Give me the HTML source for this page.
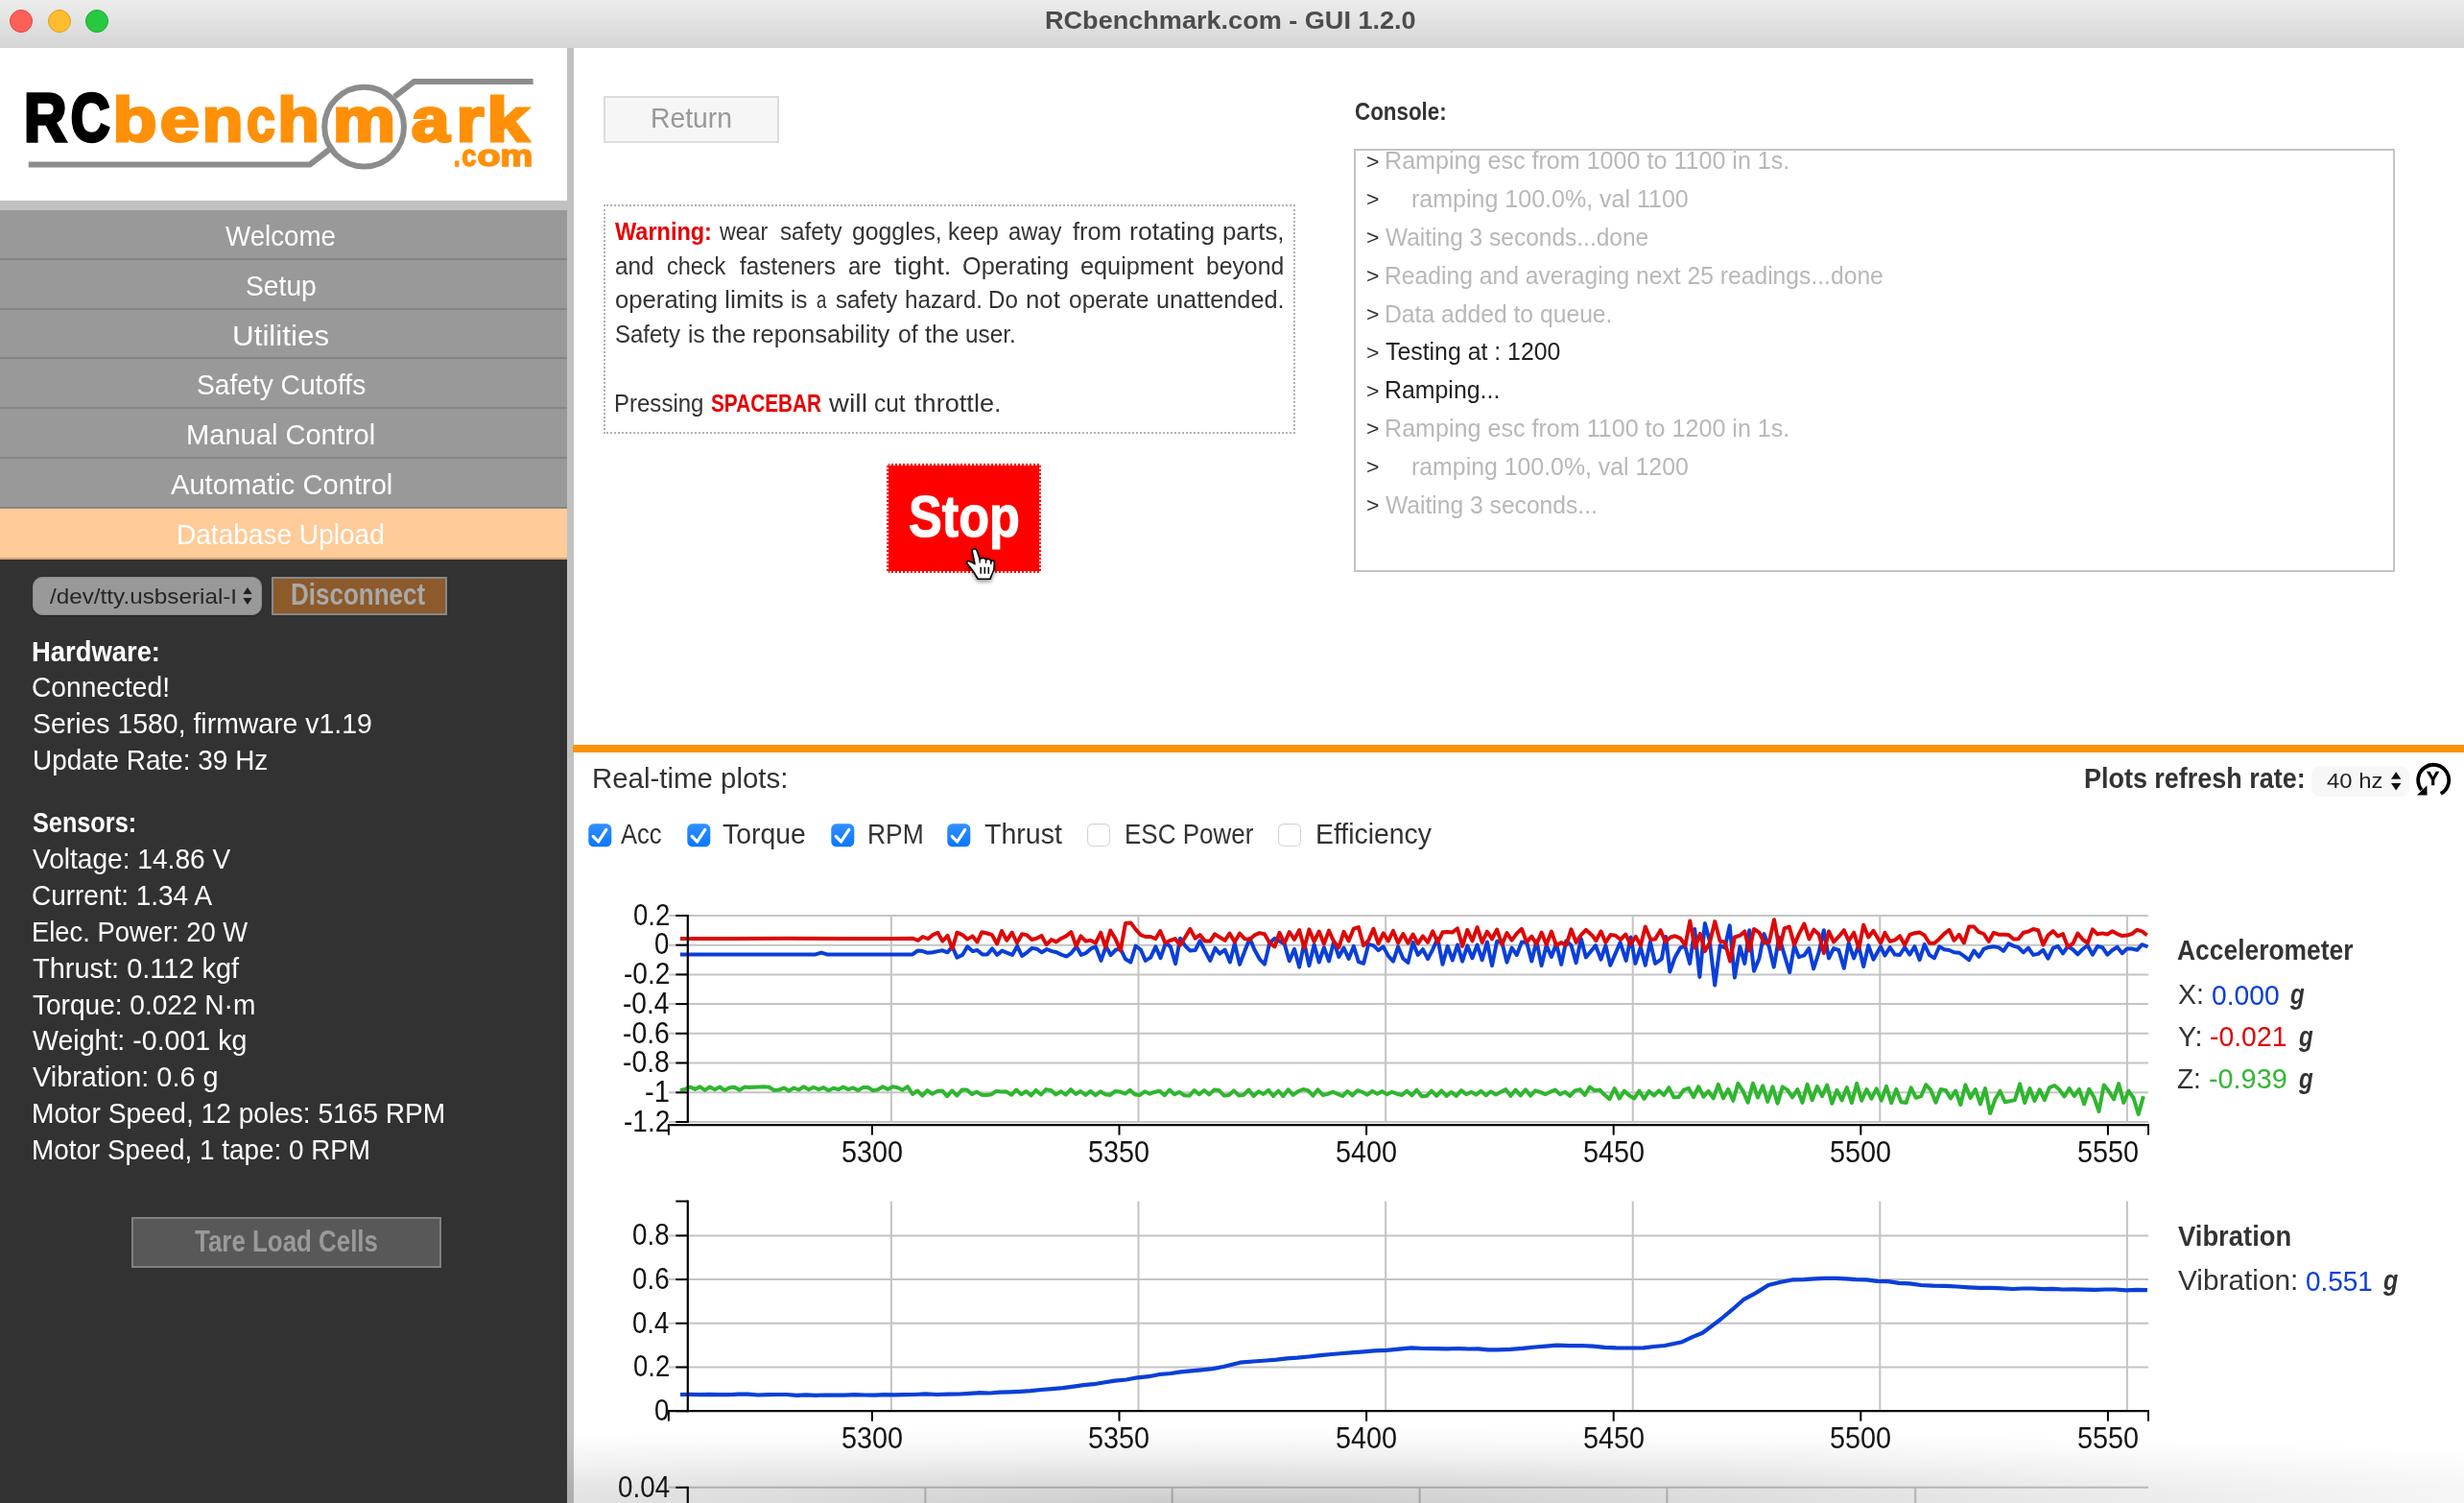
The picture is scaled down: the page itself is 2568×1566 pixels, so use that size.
<!DOCTYPE html><html><head><meta charset="utf-8"><title>RCbenchmark.com - GUI 1.2.0</title><style>
*{box-sizing:border-box;margin:0;padding:0}
html,body{width:2568px;height:1566px;overflow:hidden;background:#fff}
body{position:relative;font-family:"Liberation Sans",sans-serif;color:#333}
.abs{position:absolute}
.t{position:absolute;white-space:pre;line-height:1;transform-origin:0 0;display:block}
#titlebar{left:0;top:0;width:2568px;height:49.6px;background:linear-gradient(#ececec,#e4e4e4 40%,#d5d5d5);z-index:5}
.tl{position:absolute;top:9.8px;width:24px;height:24px;border-radius:50%}
#sidebar{left:0;top:49px;width:591px;height:1517px;background:#323232}
#sideborder{left:591px;top:49px;width:6.6px;height:1517px;background:#c1c1c1}
#logo{left:0;top:49px;width:591px;height:160px;background:#fff}
#logobar{left:0;top:209px;width:591px;height:10px;background:#c1c1c1}
.mi{position:absolute;left:0;width:591px;height:52px;background:#999;border-bottom:2px solid #858585}
.mi.sel{background:#ffcb98;border-bottom:2px solid #d0a57c}
#main{left:597px;top:49px;width:1971px;height:1517px;background:#fff}
.btn{position:absolute}
</style></head><body><div id="titlebar" class="abs"><div class="tl" style="left:9.8px;background:#fe5f57;border:1px solid #e2463f"></div><div class="tl" style="left:49.5px;background:#febc2e;border:1px solid #dfa023"></div><div class="tl" style="left:89.3px;background:#28c840;border:1px solid #1dad2b"></div><span class="t" style="left:1088.61px;top:7.99px;font-size:26px;color:#4c4c4c;transform:scaleX(1.0413);font-weight:bold;">RCbenchmark.com - GUI 1.2.0</span></div><div id="sidebar" class="abs"></div><div id="sideborder" class="abs"></div><div id="logo" class="abs"><svg width="591" height="160" viewBox="0 49 591 160" style="position:absolute;left:0;top:0"><g font-family="Liberation Sans, sans-serif" font-weight="bold"><text><tspan x="25.0" y="147.0" font-size="70" fill="#000" stroke="#000" stroke-width="3.5" textLength="44.49" lengthAdjust="spacingAndGlyphs">R</tspan><tspan x="73.75" y="147.0" font-size="70" fill="#000" stroke="#000" stroke-width="3.5" textLength="40.77" lengthAdjust="spacingAndGlyphs">C</tspan><tspan x="117.41" y="146.9" font-size="65.5" fill="#ff9008" stroke="#ff9008" stroke-width="3" textLength="45.99" lengthAdjust="spacingAndGlyphs">b</tspan><tspan x="166.76" y="146.9" font-size="65.5" fill="#ff9008" stroke="#ff9008" stroke-width="3" textLength="41.07" lengthAdjust="spacingAndGlyphs">e</tspan><tspan x="210.75" y="146.9" font-size="65.5" fill="#ff9008" stroke="#ff9008" stroke-width="3" textLength="42.62" lengthAdjust="spacingAndGlyphs">n</tspan><tspan x="257.0" y="146.9" font-size="65.5" fill="#ff9008" stroke="#ff9008" stroke-width="3" textLength="29.74" lengthAdjust="spacingAndGlyphs">c</tspan><tspan x="289.39" y="146.9" font-size="65.5" fill="#ff9008" stroke="#ff9008" stroke-width="3" textLength="43.48" lengthAdjust="spacingAndGlyphs">h</tspan><tspan x="346.86" y="146.9" font-size="65.5" fill="#ff9008" stroke="#ff9008" stroke-width="3" textLength="65.44" lengthAdjust="spacingAndGlyphs">m</tspan><tspan x="428.75" y="146.9" font-size="65.5" fill="#ff9008" stroke="#ff9008" stroke-width="3" textLength="39.78" lengthAdjust="spacingAndGlyphs">a</tspan><tspan x="475.59" y="146.9" font-size="65.5" fill="#ff9008" stroke="#ff9008" stroke-width="3" textLength="28.82" lengthAdjust="spacingAndGlyphs">r</tspan><tspan x="507.25" y="146.9" font-size="65.5" fill="#ff9008" stroke="#ff9008" stroke-width="3" textLength="43.96" lengthAdjust="spacingAndGlyphs">k</tspan></text><text><tspan x="473.3" y="173.3" font-size="32" fill="#ff9008" stroke="#ff9008" stroke-width="1.5" textLength="6.28" lengthAdjust="spacingAndGlyphs">.</tspan><tspan x="481.45" y="173.3" font-size="32" fill="#ff9008" stroke="#ff9008" stroke-width="1.5" textLength="14.97" lengthAdjust="spacingAndGlyphs">c</tspan><tspan x="497.48" y="173.3" font-size="32" fill="#ff9008" stroke="#ff9008" stroke-width="1.5" textLength="24.15" lengthAdjust="spacingAndGlyphs">o</tspan><tspan x="521.48" y="173.3" font-size="32" fill="#ff9008" stroke="#ff9008" stroke-width="1.5" textLength="33.94" lengthAdjust="spacingAndGlyphs">m</tspan></text></g><g fill="none" stroke="#8c8c8c" stroke-width="6"><circle cx="379.6" cy="132.1" r="41.4"/><path d="M29.75 171.4 H323 L347.5 152.5"/><path d="M555.6 85 H431.5 L411 100.8"/></g></svg></div><div id="logobar" class="abs"></div><nav id="menu"><div class="mi" style="top:219.00px;height:51.75px"></div><span class="t" style="left:235.20px;top:231.16px;font-size:30px;color:#fff;transform:scaleX(0.9240);">Welcome</span><div class="mi" style="top:270.75px;height:51.75px"></div><span class="t" style="left:255.92px;top:282.91px;font-size:30px;color:#fff;transform:scaleX(0.9417);">Setup</span><div class="mi" style="top:322.50px;height:51.75px"></div><span class="t" style="left:241.74px;top:334.66px;font-size:30px;color:#fff;transform:scaleX(1.0462);">Utilities</span><div class="mi" style="top:374.25px;height:51.75px"></div><span class="t" style="left:204.62px;top:386.41px;font-size:30px;color:#fff;transform:scaleX(0.9381);">Safety Cutoffs</span><div class="mi" style="top:426.00px;height:51.75px"></div><span class="t" style="left:194.13px;top:438.16px;font-size:30px;color:#fff;transform:scaleX(0.9693);">Manual Control</span><div class="mi" style="top:477.75px;height:51.75px"></div><span class="t" style="left:177.70px;top:489.90px;font-size:30px;color:#fff;transform:scaleX(0.9702);">Automatic Control</span><div class="mi sel" style="top:529.50px;height:53.50px"></div><span class="t" style="left:183.71px;top:541.65px;font-size:30px;color:#fff;transform:scaleX(0.9350);">Database Upload</span></nav><div id="status"><div class="abs" style="left:34px;top:601px;width:239px;height:40px;border-radius:10px;background:#999;border:1px solid #8c8c8c;box-shadow:0 1px 1px rgba(0,0,0,.3)"></div><span class="t" style="left:51.90px;top:611.28px;font-size:22px;color:#262626;transform:scaleX(1.1030);">/dev/tty.usbserial-I</span><svg class="abs" style="left:250px;top:608px" width="16" height="26" viewBox="0 0 16 26"><path d="M8 4 L12.6 11 H3.4 Z M8 22 L12.6 15 H3.4 Z" fill="#1e1e1e"/></svg><div class="abs" style="left:282.5px;top:601px;width:183.5px;height:40px;background:#8c5a2b;border:2px solid #888"></div><span class="t" style="left:303.08px;top:603.68px;font-size:30.5px;color:#a9a9a9;transform:scaleX(0.8519);font-weight:bold;">Disconnect</span><span class="t" style="left:33.09px;top:663.53px;font-size:29.5px;color:#fff;transform:scaleX(0.9287);font-weight:bold;">Hardware:</span><span class="t" style="left:33.48px;top:701.33px;font-size:29.5px;color:#fff;transform:scaleX(0.9541);">Connected!</span><span class="t" style="left:33.71px;top:739.33px;font-size:29.5px;color:#fff;transform:scaleX(0.9634);">Series 1580, firmware v1.19</span><span class="t" style="left:33.65px;top:777.13px;font-size:29.5px;color:#fff;transform:scaleX(0.9466);">Update Rate: 39 Hz</span><span class="t" style="left:34.41px;top:842.33px;font-size:29.5px;color:#fff;transform:scaleX(0.8562);font-weight:bold;">Sensors:</span><span class="t" style="left:34.20px;top:880.33px;font-size:29.5px;color:#fff;transform:scaleX(0.9522);">Voltage: 14.86 V</span><span class="t" style="left:33.29px;top:918.13px;font-size:29.5px;color:#fff;transform:scaleX(0.9476);">Current: 1.34 A</span><span class="t" style="left:33.36px;top:956.23px;font-size:29.5px;color:#fff;transform:scaleX(0.9276);">Elec. Power: 20 W</span><span class="t" style="left:33.95px;top:994.33px;font-size:29.5px;color:#fff;transform:scaleX(0.9816);">Thrust: 0.112 kgf</span><span class="t" style="left:33.96px;top:1032.03px;font-size:29.5px;color:#fff;transform:scaleX(0.9508);">Torque: 0.022 N·m</span><span class="t" style="left:34.40px;top:1069.33px;font-size:29.5px;color:#fff;transform:scaleX(0.9681);">Weight: -0.001 kg</span><span class="t" style="left:34.40px;top:1107.13px;font-size:29.5px;color:#fff;transform:scaleX(0.9779);">Vibration: 0.6 g</span><span class="t" style="left:33.30px;top:1145.13px;font-size:29.5px;color:#fff;transform:scaleX(0.9529);">Motor Speed, 12 poles: 5165 RPM</span><span class="t" style="left:33.32px;top:1183.23px;font-size:29.5px;color:#fff;transform:scaleX(0.9443);">Motor Speed, 1 tape: 0 RPM</span><div class="abs" style="left:137.2px;top:1267.9px;width:322.5px;height:53.1px;background:#585858;border:2px solid #808080"></div><span class="t" style="left:203.30px;top:1277.68px;font-size:30.5px;color:#9a9a9a;transform:scaleX(0.8492);font-weight:bold;">Tare Load Cells</span></div><div id="content"><div class="abs" style="left:629px;top:99.5px;width:183px;height:49.5px;background:#f6f6f6;border:2px solid #dcdcdc"></div><span class="t" style="left:677.99px;top:107.70px;font-size:30px;color:#999;transform:scaleX(0.9440);">Return</span><div class="abs" style="left:629px;top:213.5px;width:1721px;height:0"></div><div class="abs" style="left:628.9px;top:213.2px;width:720.9px;height:238.5px;border:2px dotted #b2b2b2"></div><div id="warning"><span class="t" style="left:641.30px;top:228.86px;font-size:25.5px;color:#e60000;transform:scaleX(0.9216);font-weight:bold;">Warning: </span><span class="t" style="left:750.46px;top:228.86px;font-size:25.5px;color:#333;transform:scaleX(0.9074);">wear </span><span class="t" style="left:812.82px;top:228.86px;font-size:25.5px;color:#333;transform:scaleX(0.9477);">safety </span><span class="t" style="left:887.53px;top:228.86px;font-size:25.5px;color:#333;transform:scaleX(0.9722);">goggles, </span><span class="t" style="left:988.28px;top:228.86px;font-size:25.5px;color:#333;transform:scaleX(0.9531);">keep </span><span class="t" style="left:1050.56px;top:228.86px;font-size:25.5px;color:#333;transform:scaleX(0.9313);">away </span><span class="t" style="left:1117.50px;top:228.86px;font-size:25.5px;color:#333;transform:scaleX(0.9964);">from </span><span class="t" style="left:1176.83px;top:228.86px;font-size:25.5px;color:#333;transform:scaleX(1.0460);">rotating </span><span class="t" style="left:1274.19px;top:228.86px;font-size:25.5px;color:#333;transform:scaleX(1.0120);">parts, </span><span class="t" style="left:640.94px;top:264.61px;font-size:25.5px;color:#333;transform:scaleX(0.9549);">and </span><span class="t" style="left:694.77px;top:264.61px;font-size:25.5px;color:#333;transform:scaleX(0.9212);">check </span><span class="t" style="left:771.00px;top:264.61px;font-size:25.5px;color:#333;transform:scaleX(0.9530);">fasteners </span><span class="t" style="left:883.75px;top:264.61px;font-size:25.5px;color:#333;transform:scaleX(0.9422);">are </span><span class="t" style="left:932.00px;top:264.61px;font-size:25.5px;color:#333;transform:scaleX(1.0759);">tight. </span><span class="t" style="left:1002.61px;top:264.61px;font-size:25.5px;color:#333;transform:scaleX(0.9921);">Operating </span><span class="t" style="left:1126.21px;top:264.61px;font-size:25.5px;color:#333;transform:scaleX(0.9909);">equipment </span><span class="t" style="left:1257.05px;top:264.61px;font-size:25.5px;color:#333;transform:scaleX(0.9698);">beyond </span><span class="t" style="left:640.90px;top:300.36px;font-size:25.5px;color:#333;transform:scaleX(1.0076);">operating </span><span class="t" style="left:754.81px;top:300.36px;font-size:25.5px;color:#333;transform:scaleX(1.0632);">limits </span><span class="t" style="left:824.29px;top:300.36px;font-size:25.5px;color:#333;transform:scaleX(0.9485);">is </span><span class="t" style="left:850.52px;top:300.36px;font-size:25.5px;color:#333;transform:scaleX(0.7308);">a </span><span class="t" style="left:871.12px;top:300.36px;font-size:25.5px;color:#333;transform:scaleX(0.9448);">safety </span><span class="t" style="left:943.48px;top:300.36px;font-size:25.5px;color:#333;transform:scaleX(0.9512);">hazard. </span><span class="t" style="left:1030.41px;top:300.36px;font-size:25.5px;color:#333;transform:scaleX(0.9469);">Do </span><span class="t" style="left:1069.09px;top:300.36px;font-size:25.5px;color:#333;transform:scaleX(1.0106);">not </span><span class="t" style="left:1114.23px;top:300.36px;font-size:25.5px;color:#333;transform:scaleX(0.9639);">operate </span><span class="t" style="left:1204.92px;top:300.36px;font-size:25.5px;color:#333;transform:scaleX(0.9915);">unattended. </span><span class="t" style="left:640.95px;top:336.11px;font-size:25.5px;color:#333;transform:scaleX(0.9399);">Safety </span><span class="t" style="left:716.88px;top:336.11px;font-size:25.5px;color:#333;transform:scaleX(0.9548);">is </span><span class="t" style="left:741.90px;top:336.11px;font-size:25.5px;color:#333;transform:scaleX(0.9967);">the </span><span class="t" style="left:783.50px;top:336.11px;font-size:25.5px;color:#333;transform:scaleX(1.0009);">reponsability </span><span class="t" style="left:935.62px;top:336.11px;font-size:25.5px;color:#333;transform:scaleX(0.9729);">of </span><span class="t" style="left:964.40px;top:336.11px;font-size:25.5px;color:#333;transform:scaleX(0.9967);">the </span><span class="t" style="left:1005.98px;top:336.11px;font-size:25.5px;color:#333;transform:scaleX(0.9536);">user. </span><span class="t" style="left:640.22px;top:407.61px;font-size:25.5px;color:#333;transform:scaleX(0.9417);">Pressing </span><span class="t" style="left:740.58px;top:407.61px;font-size:25.5px;color:#e60000;transform:scaleX(0.8153);font-weight:bold;">SPACEBAR </span><span class="t" style="left:863.85px;top:407.61px;font-size:25.5px;color:#333;transform:scaleX(1.1339);">will </span><span class="t" style="left:910.84px;top:407.61px;font-size:25.5px;color:#333;transform:scaleX(0.9578);">cut </span><span class="t" style="left:952.60px;top:407.61px;font-size:25.5px;color:#333;transform:scaleX(1.0648);">throttle. </span></div><div class="abs" style="left:923.5px;top:483px;width:161.5px;height:114px;background:#fe0000;border:2px dotted #fff;outline:0"></div><span class="t" style="left:946.69px;top:508.16px;font-size:61px;color:#fff;-webkit-text-stroke:1.2px #fff;transform:scaleX(0.8546);font-weight:bold;">Stop</span><svg class="abs" style="left:1003px;top:567px;filter:drop-shadow(0 2px 2px rgba(0,0,0,.45))" width="38" height="42" viewBox="-4 -4 38 42"><path d="M8.6 0.6 C6.8 0.8 6 2.4 6.4 4 L9 16.6 L3 13.6 C1.4 13.2 0.2 14.6 0.8 16 L7.5 24.3 L11.4 31 L12.3 32.3 H25.1 L25.8 29.6 C27.6 26 28.8 23.4 29 21 L29.3 14.6 C29 12.8 26.4 12.6 25.8 14.4 C25.6 11.4 22.2 10.4 20.6 12.4 C20 10.2 16.2 9.4 14.2 11.8 L11.4 3.6 C11 1.8 10 0.6 8.6 0.6 Z" fill="#fff" stroke="#000" stroke-width="1.6" stroke-linejoin="round"/><path d="M15.2 19.8 V26.7 M19.3 19.8 V26.7 M23.3 19.8 V26.7" stroke="#000" stroke-width="1.5" fill="none"/><path d="M14.1 11.8 V15.6 M20.5 12.3 V16 M25.8 14.4 V17.2" stroke="#000" stroke-width="1.3" fill="none"/></svg><span class="t" style="left:1412.00px;top:102.67px;font-size:26.5px;color:#333;transform:scaleX(0.8438);font-weight:bold;">Console:</span><div class="abs" style="left:1411.4px;top:155.3px;width:1085px;height:441px;border:2px solid #c4c4c4;background:#fff"></div><div class="line"><span class="t" style="left:1423.62px;top:158.50px;font-size:21.5px;color:#333;transform:scaleX(1.0698);">&gt; </span><span class="t" style="left:1443.34px;top:155.24px;font-size:25px;color:#b8b8b8;transform:scaleX(1.0041);">Ramping esc from 1000 to 1100 in 1s.</span></div><div class="line"><span class="t" style="left:1423.62px;top:198.35px;font-size:21.5px;color:#333;transform:scaleX(1.0698);">&gt; </span><span class="t" style="left:1471.24px;top:195.09px;font-size:25px;color:#b8b8b8;transform:scaleX(1.0006);">ramping 100.0%, val 1100</span></div><div class="line"><span class="t" style="left:1423.62px;top:238.20px;font-size:21.5px;color:#333;transform:scaleX(1.0698);">&gt; </span><span class="t" style="left:1444.10px;top:234.94px;font-size:25px;color:#b8b8b8;transform:scaleX(0.9800);">Waiting 3 seconds...done</span></div><div class="line"><span class="t" style="left:1423.62px;top:278.05px;font-size:21.5px;color:#333;transform:scaleX(1.0698);">&gt; </span><span class="t" style="left:1443.37px;top:274.79px;font-size:25px;color:#b8b8b8;transform:scaleX(0.9868);">Reading and averaging next 25 readings...done</span></div><div class="line"><span class="t" style="left:1423.62px;top:317.90px;font-size:21.5px;color:#333;transform:scaleX(1.0698);">&gt; </span><span class="t" style="left:1443.37px;top:314.64px;font-size:25px;color:#b8b8b8;transform:scaleX(0.9874);">Data added to queue.</span></div><div class="line"><span class="t" style="left:1423.62px;top:357.75px;font-size:21.5px;color:#333;transform:scaleX(1.0698);">&gt; </span><span class="t" style="left:1443.71px;top:354.49px;font-size:25px;color:#222;transform:scaleX(0.9943);">Testing at : 1200</span></div><div class="line"><span class="t" style="left:1423.62px;top:397.60px;font-size:21.5px;color:#333;transform:scaleX(1.0698);">&gt; </span><span class="t" style="left:1443.36px;top:394.34px;font-size:25px;color:#222;transform:scaleX(0.9951);">Ramping...</span></div><div class="line"><span class="t" style="left:1423.62px;top:437.45px;font-size:21.5px;color:#333;transform:scaleX(1.0698);">&gt; </span><span class="t" style="left:1443.34px;top:434.19px;font-size:25px;color:#b8b8b8;transform:scaleX(1.0041);">Ramping esc from 1100 to 1200 in 1s.</span></div><div class="line"><span class="t" style="left:1423.62px;top:477.30px;font-size:21.5px;color:#333;transform:scaleX(1.0698);">&gt; </span><span class="t" style="left:1471.25px;top:474.04px;font-size:25px;color:#b8b8b8;transform:scaleX(0.9942);">ramping 100.0%, val 1200</span></div><div class="line"><span class="t" style="left:1423.62px;top:517.15px;font-size:21.5px;color:#333;transform:scaleX(1.0698);">&gt; </span><span class="t" style="left:1444.10px;top:513.89px;font-size:25px;color:#b8b8b8;transform:scaleX(0.9850);">Waiting 3 seconds...</span></div><div class="abs" style="left:597px;top:776px;width:1971px;height:8px;background:#ff9307"></div></div><div id="plots"><span class="t" style="left:616.70px;top:796.31px;font-size:30px;color:#333;transform:scaleX(0.9806);">Real-time plots:</span><svg class="abs" style="left:613px;top:857.5px" width="25" height="25" viewBox="0 0 25 25"><defs><linearGradient id="cbg" x1="0" y1="0" x2="0" y2="1"><stop offset="0" stop-color="#3290ff"/><stop offset="1" stop-color="#0a76ff"/></linearGradient></defs><rect x="0.3" y="0.3" width="24" height="24" rx="5.5" fill="url(#cbg)"/><path d="M5.2 13.4 L10.6 19 L18.8 6.4" fill="none" stroke="#fff" stroke-width="3.2" stroke-linecap="round" stroke-linejoin="round"/></svg><span class="t" style="left:647.40px;top:853.71px;font-size:30px;color:#333;transform:scaleX(0.8518);">Acc</span><svg class="abs" style="left:716.4px;top:857.5px" width="25" height="25" viewBox="0 0 25 25"><defs><linearGradient id="cbg" x1="0" y1="0" x2="0" y2="1"><stop offset="0" stop-color="#3290ff"/><stop offset="1" stop-color="#0a76ff"/></linearGradient></defs><rect x="0.3" y="0.3" width="24" height="24" rx="5.5" fill="url(#cbg)"/><path d="M5.2 13.4 L10.6 19 L18.8 6.4" fill="none" stroke="#fff" stroke-width="3.2" stroke-linecap="round" stroke-linejoin="round"/></svg><span class="t" style="left:753.46px;top:853.71px;font-size:30px;color:#333;transform:scaleX(0.9473);">Torque</span><svg class="abs" style="left:865.8px;top:857.5px" width="25" height="25" viewBox="0 0 25 25"><defs><linearGradient id="cbg" x1="0" y1="0" x2="0" y2="1"><stop offset="0" stop-color="#3290ff"/><stop offset="1" stop-color="#0a76ff"/></linearGradient></defs><rect x="0.3" y="0.3" width="24" height="24" rx="5.5" fill="url(#cbg)"/><path d="M5.2 13.4 L10.6 19 L18.8 6.4" fill="none" stroke="#fff" stroke-width="3.2" stroke-linecap="round" stroke-linejoin="round"/></svg><span class="t" style="left:903.74px;top:853.71px;font-size:30px;color:#333;transform:scaleX(0.8796);">RPM</span><svg class="abs" style="left:986.7px;top:857.5px" width="25" height="25" viewBox="0 0 25 25"><defs><linearGradient id="cbg" x1="0" y1="0" x2="0" y2="1"><stop offset="0" stop-color="#3290ff"/><stop offset="1" stop-color="#0a76ff"/></linearGradient></defs><rect x="0.3" y="0.3" width="24" height="24" rx="5.5" fill="url(#cbg)"/><path d="M5.2 13.4 L10.6 19 L18.8 6.4" fill="none" stroke="#fff" stroke-width="3.2" stroke-linecap="round" stroke-linejoin="round"/></svg><span class="t" style="left:1026.05px;top:853.71px;font-size:30px;color:#333;transform:scaleX(0.9509);">Thrust</span><div class="abs" style="left:1132.7px;top:858.0px;width:24px;height:24px;border-radius:5.5px;background:#fff;border:1.5px solid #d4d4d4;box-shadow:inset 0 1px 2px rgba(0,0,0,.08)"></div><span class="t" style="left:1171.77px;top:853.71px;font-size:30px;color:#333;transform:scaleX(0.8665);">ESC Power</span><div class="abs" style="left:1332.3px;top:858.0px;width:24px;height:24px;border-radius:5.5px;background:#fff;border:1.5px solid #d4d4d4;box-shadow:inset 0 1px 2px rgba(0,0,0,.08)"></div><span class="t" style="left:1370.78px;top:853.71px;font-size:30px;color:#333;transform:scaleX(0.9467);">Efficiency</span><span class="t" style="left:2172.02px;top:796.31px;font-size:30px;color:#333;transform:scaleX(0.8982);font-weight:bold;">Plots refresh rate:</span><div class="abs" style="left:2409px;top:798px;width:101.5px;height:32px;border-radius:9px;background:#f7f7f7"></div><span class="t" style="left:2425.23px;top:803.18px;font-size:22px;color:#222;transform:scaleX(1.0850);">40 hz</span><svg class="abs" style="left:2489px;top:801px" width="16" height="26" viewBox="2489 801 16 26"><path d="M2497.2 804.2 L2502.4 811.8 H2492 Z M2497.2 823.6 L2502.4 816 H2492 Z" fill="#111"/></svg><svg class="abs" style="left:2512px;top:790px" width="50" height="46" viewBox="2512 790 50 46"><path d="M2543.71 826.93 A16.0 16.0 0 1 0 2523.94 823.08" fill="none" stroke="#000" stroke-width="3.8"/><path d="M2529.4 818.6 L2529.6 828.6 L2519 828.6 Z" fill="#000"/></svg><span class="t" style="left:2529.39px;top:801.74px;font-size:19.8px;color:#000;-webkit-text-stroke:0.5px #000;transform:scaleX(1.0012);font-weight:bold;">Y</span><svg class="abs" style="left:597px;top:900px" width="1971" height="666" viewBox="597 900 1971 666"><line x1="696.9" y1="954.0" x2="2239.0" y2="954.0" stroke="#c4c4c4" stroke-width="2"/><line x1="696.9" y1="984.7" x2="2239.0" y2="984.7" stroke="#c4c4c4" stroke-width="2"/><line x1="696.9" y1="1015.4" x2="2239.0" y2="1015.4" stroke="#c4c4c4" stroke-width="2"/><line x1="696.9" y1="1046.1" x2="2239.0" y2="1046.1" stroke="#c4c4c4" stroke-width="2"/><line x1="696.9" y1="1076.8" x2="2239.0" y2="1076.8" stroke="#c4c4c4" stroke-width="2"/><line x1="696.9" y1="1107.5" x2="2239.0" y2="1107.5" stroke="#c4c4c4" stroke-width="2"/><line x1="696.9" y1="1138.3" x2="2239.0" y2="1138.3" stroke="#c4c4c4" stroke-width="2"/><line x1="696.9" y1="1169.0" x2="2239.0" y2="1169.0" stroke="#c4c4c4" stroke-width="2"/><line x1="928.9" y1="954.0" x2="928.9" y2="1169.0" stroke="#c4c4c4" stroke-width="2"/><line x1="1186.5" y1="954.0" x2="1186.5" y2="1169.0" stroke="#c4c4c4" stroke-width="2"/><line x1="1444.1" y1="954.0" x2="1444.1" y2="1169.0" stroke="#c4c4c4" stroke-width="2"/><line x1="1701.7" y1="954.0" x2="1701.7" y2="1169.0" stroke="#c4c4c4" stroke-width="2"/><line x1="1959.3" y1="954.0" x2="1959.3" y2="1169.0" stroke="#c4c4c4" stroke-width="2"/><line x1="2216.9" y1="954.0" x2="2216.9" y2="1169.0" stroke="#c4c4c4" stroke-width="2"/><polyline points="708.9,994.4 850.0,994.4 856.0,992.6 862.0,994.4 930.0,994.4 951.1,994.4 956.3,990.6 961.7,991.1 967.0,992.8 972.2,992.3 977.4,991.1 982.3,990.3 987.6,992.3 992.5,986.3 997.4,997.6 1003.1,994.9 1008.2,986.3 1013.6,991.1 1018.5,990.0 1023.8,994.4 1029.0,994.4 1034.2,988.4 1039.1,994.9 1044.4,990.6 1049.8,992.8 1055.0,994.9 1060.2,985.8 1065.1,996.0 1070.4,992.3 1075.6,987.9 1080.6,988.7 1085.8,992.3 1091.0,989.0 1096.4,991.1 1101.3,992.3 1106.6,994.9 1111.8,996.5 1116.7,992.8 1121.9,986.3 1126.8,994.9 1132.1,992.8 1137.0,988.4 1141.9,986.3 1147.5,1000.9 1152.7,985.8 1157.6,995.2 1163.0,989.5 1167.8,988.7 1173.0,999.3 1178.4,1002.5 1183.6,985.5 1188.9,989.5 1193.8,1000.9 1199.2,997.6 1204.4,986.3 1209.5,998.1 1214.9,982.5 1219.8,986.3 1225.1,1004.1 1230.0,977.7 1235.2,985.5 1240.4,990.6 1245.7,990.0 1250.6,980.3 1256.0,991.1 1261.2,1000.9 1266.4,987.9 1271.2,993.6 1276.6,989.5 1281.9,1002.5 1286.8,983.0 1292.0,1004.9 1297.2,991.1 1302.6,977.7 1307.4,989.5 1312.8,999.3 1318.0,1004.6 1323.2,982.5 1328.5,977.7 1333.5,980.5 1338.7,983.6 1343.8,1001.2 1349.0,988.8 1354.1,1007.6 1359.3,982.4 1364.4,1006.1 1369.6,984.3 1374.7,1002.5 1379.9,987.2 1385.0,1001.4 1390.2,980.8 1395.3,997.0 1400.5,987.5 1405.6,998.9 1410.8,985.9 1415.9,1002.2 1421.1,1003.9 1426.2,983.9 1431.4,985.1 1436.5,990.1 1441.7,986.4 1446.8,995.9 1452.0,1001.6 1457.1,986.4 1462.3,998.8 1467.5,1002.9 1472.6,981.9 1477.8,995.0 1482.9,989.2 1488.1,999.2 1493.2,989.3 1498.4,977.8 1503.5,1004.8 1508.7,985.9 1513.8,1000.5 1519.0,984.5 1524.1,1001.6 1529.3,985.3 1534.4,998.3 1539.6,984.5 1544.7,1000.3 1549.9,981.5 1555.0,1006.1 1560.2,980.7 1565.3,981.8 1570.5,1002.6 1575.6,987.6 1580.8,995.0 1585.9,981.6 1591.1,981.8 1596.3,1001.5 1601.4,980.4 1606.6,1006.1 1611.7,984.7 1616.9,997.0 1622.0,983.2 1627.2,1004.9 1632.3,980.2 1637.5,984.9 1642.6,1003.1 1647.8,978.1 1652.9,997.4 1660.0,988.7 1663.0,985.1 1668.5,999.7 1673.4,985.1 1678.3,1005.7 1688.6,982.0 1694.7,1000.9 1699.6,976.5 1704.4,1003.9 1709.9,986.9 1714.8,1005.7 1719.9,981.4 1725.1,1003.9 1731.8,999.1 1736.1,975.9 1740.4,1012.4 1745.8,997.2 1751.3,987.5 1756.2,985.7 1761.1,1003.9 1766.2,968.0 1771.4,1017.9 1776.9,961.9 1781.8,980.2 1787.2,1026.4 1792.7,985.1 1797.6,987.5 1802.7,964.4 1807.9,1018.5 1813.4,986.3 1818.3,1003.9 1823.2,969.2 1828.0,1011.8 1833.5,998.4 1838.4,972.9 1843.9,986.9 1848.7,1007.6 1854.2,976.5 1859.7,994.8 1865.2,1013.1 1870.0,985.1 1874.9,997.2 1880.4,995.4 1885.3,988.1 1890.1,1009.4 1895.6,992.4 1900.8,969.2 1906.0,998.4 1911.1,988.1 1916.3,989.9 1921.8,1008.8 1926.7,982.6 1932.1,998.4 1937.0,985.1 1942.2,1007.0 1947.3,985.1 1952.5,999.7 1960.0,986.3 1964.5,995.5 1969.7,987.0 1974.8,994.6 1980.0,995.0 1985.1,987.0 1990.3,994.7 1995.4,986.2 2000.6,1000.1 2005.7,984.0 2010.9,995.1 2016.0,998.3 2021.2,986.3 2026.3,989.2 2031.5,990.0 2036.6,992.3 2041.8,992.7 2046.9,996.1 2052.1,1000.2 2057.2,990.6 2062.4,996.8 2067.5,988.8 2072.7,986.9 2077.8,986.2 2083.0,987.1 2088.1,990.8 2093.3,983.1 2098.5,985.6 2103.6,987.1 2108.8,992.4 2113.9,987.6 2119.1,994.9 2124.2,993.9 2129.4,989.8 2134.5,998.7 2139.7,987.9 2144.8,985.9 2150.0,993.4 2155.1,986.0 2160.3,989.3 2165.4,994.3 2170.6,989.0 2175.7,985.0 2180.9,994.7 2186.0,985.9 2191.2,987.2 2196.3,994.7 2201.5,990.0 2206.6,986.7 2211.8,993.2 2216.9,988.4 2222.1,988.6 2227.3,989.8 2232.4,984.2 2238.5,986.5" fill="none" stroke="#0a3fd8" stroke-width="4" stroke-linejoin="round" stroke-linecap="butt"/><polyline points="708.9,977.9 760.0,978.0 820.0,977.7 880.0,978.0 930.0,978.1 951.1,977.7 956.8,979.8 961.7,976.0 967.3,978.1 972.5,973.8 977.4,971.8 982.3,980.6 987.6,974.9 992.5,988.7 997.4,971.7 1003.1,974.1 1008.2,978.6 1013.6,975.4 1018.5,981.4 1023.3,971.2 1029.0,972.5 1033.9,974.1 1039.1,983.5 1044.0,970.0 1049.3,979.8 1054.7,971.7 1059.9,982.5 1065.1,973.3 1069.9,974.1 1075.3,979.0 1080.2,977.7 1085.5,974.9 1090.7,984.2 1095.9,979.0 1100.8,981.4 1106.1,977.7 1111.0,975.4 1116.4,971.2 1121.6,985.8 1126.4,975.4 1131.6,980.6 1136.5,979.8 1141.9,982.5 1147.2,971.7 1152.1,986.8 1157.3,969.5 1162.5,978.1 1167.8,990.3 1173.0,961.9 1178.4,961.4 1183.6,968.4 1188.9,974.1 1193.8,976.0 1199.2,976.0 1204.4,978.1 1209.2,970.0 1214.4,982.5 1219.8,979.8 1224.6,978.1 1230.0,984.6 1235.2,976.5 1240.4,967.9 1245.7,977.7 1250.6,974.1 1256.0,980.6 1261.2,980.6 1266.0,973.3 1271.2,976.5 1276.6,979.8 1281.5,972.5 1286.8,981.4 1292.0,972.5 1297.2,978.1 1302.6,979.0 1307.4,974.4 1312.8,972.1 1318.0,973.3 1323.2,982.5 1328.5,986.3 1333.5,971.8 1338.7,982.8 1343.8,971.0 1349.0,978.8 1354.1,969.1 1359.3,987.7 1364.4,968.4 1369.6,980.9 1374.7,970.5 1379.9,983.4 1385.0,969.6 1390.2,981.2 1395.3,987.3 1400.5,970.8 1405.6,980.4 1410.8,967.6 1415.9,966.1 1421.1,985.2 1426.2,980.0 1431.4,967.7 1436.5,983.1 1441.7,972.3 1446.8,980.5 1452.0,969.9 1457.1,982.6 1462.3,973.0 1467.5,982.7 1472.6,973.5 1477.8,983.1 1482.9,975.4 1488.1,981.8 1493.2,970.3 1498.4,982.0 1503.5,971.3 1508.7,971.0 1513.8,971.4 1519.0,967.3 1524.1,985.9 1529.3,968.9 1534.4,980.3 1539.6,966.2 1544.7,982.0 1549.9,970.7 1555.0,978.3 1560.2,968.5 1565.3,984.2 1570.5,972.0 1575.6,979.6 1580.8,972.6 1585.9,967.8 1591.1,981.6 1596.3,975.6 1601.4,983.8 1606.6,971.6 1611.7,984.3 1616.9,970.5 1622.0,985.1 1627.2,982.1 1632.3,984.8 1637.5,968.3 1642.6,981.9 1647.8,974.1 1652.9,968.8 1660.0,975.3 1663.4,980.2 1668.5,970.4 1673.4,982.0 1678.5,974.1 1683.7,974.7 1689.0,979.0 1694.3,973.5 1699.2,983.8 1704.8,975.9 1709.9,985.1 1714.8,965.6 1720.3,979.0 1725.1,978.4 1730.6,969.2 1735.7,981.4 1741.0,976.5 1745.8,975.3 1751.3,977.7 1756.4,985.1 1761.3,959.5 1766.5,987.5 1771.8,972.9 1776.9,991.1 1782.0,982.0 1787.2,960.1 1792.7,980.8 1797.6,981.4 1803.1,1001.5 1807.9,976.5 1813.4,974.7 1818.3,970.4 1823.2,990.5 1828.0,968.0 1833.5,971.7 1838.7,982.6 1843.9,981.4 1849.0,958.3 1854.6,988.7 1859.7,967.4 1864.8,965.6 1870.0,984.4 1875.3,972.3 1880.4,962.5 1885.5,978.4 1890.4,968.6 1895.6,973.5 1900.8,993.0 1906.0,970.4 1911.1,981.4 1916.3,975.9 1921.8,969.2 1926.7,980.2 1932.1,971.7 1937.4,988.1 1942.2,963.7 1947.3,976.5 1952.5,969.8 1960.0,982.6 1964.5,971.9 1969.7,980.7 1974.8,979.5 1980.0,975.2 1985.1,984.5 1990.3,974.0 1995.4,972.2 2000.6,971.4 2005.7,974.5 2010.9,982.8 2016.0,982.7 2021.2,978.2 2026.3,972.9 2031.5,968.9 2036.6,979.8 2041.8,973.8 2046.9,982.4 2052.1,965.5 2057.2,965.5 2062.4,971.1 2067.5,973.0 2072.7,980.9 2077.8,971.8 2083.0,973.7 2088.1,973.8 2093.3,974.1 2098.5,978.6 2103.6,978.3 2108.8,971.7 2113.9,970.6 2119.1,968.0 2124.2,969.2 2129.4,984.5 2134.5,974.5 2139.7,970.1 2144.8,975.5 2150.0,973.2 2155.1,986.4 2160.3,983.3 2165.4,972.6 2170.6,978.8 2175.7,982.7 2180.9,968.4 2186.0,973.4 2191.2,972.4 2196.3,973.5 2201.5,970.2 2206.6,973.1 2211.8,975.1 2216.9,974.6 2222.1,972.9 2227.3,968.8 2232.4,970.3 2237.6,974.4" fill="none" stroke="#dd0808" stroke-width="4" stroke-linejoin="round" stroke-linecap="butt"/><polyline points="708.9,1135.9 714.1,1134.9 719.2,1132.5 724.4,1134.9 729.5,1132.3 734.7,1135.9 739.8,1132.5 745.0,1135.2 750.1,1132.5 755.3,1136.1 760.4,1133.3 765.6,1132.7 770.7,1135.7 775.9,1132.6 781.0,1133.1 786.2,1132.7 791.3,1132.4 796.5,1132.3 801.6,1132.7 806.8,1136.0 811.9,1135.5 817.1,1133.6 822.2,1136.5 827.4,1133.6 832.5,1135.5 837.7,1132.2 842.9,1135.3 848.0,1132.7 853.2,1135.1 858.3,1133.1 863.5,1136.3 868.6,1133.7 873.8,1135.1 878.9,1132.6 884.1,1135.1 889.2,1133.4 894.4,1136.1 899.5,1132.9 904.7,1133.0 909.8,1136.3 915.0,1135.3 920.1,1132.2 925.3,1135.1 930.4,1132.2 935.6,1133.2 940.7,1135.6 945.9,1132.1 951.0,1140.0 956.2,1136.5 961.3,1141.6 966.5,1136.1 971.7,1139.8 976.8,1137.1 982.0,1136.4 987.1,1142.2 992.3,1136.3 997.4,1141.5 1002.6,1135.5 1007.7,1135.5 1012.9,1140.1 1018.0,1137.6 1023.2,1140.7 1028.3,1141.0 1033.5,1140.2 1038.6,1136.7 1043.8,1137.6 1048.9,1137.3 1054.1,1140.8 1059.2,1135.5 1064.4,1140.2 1069.5,1137.0 1074.7,1141.4 1079.8,1135.9 1085.0,1140.5 1090.1,1135.1 1095.3,1136.0 1100.5,1140.4 1105.6,1137.2 1110.8,1140.6 1115.9,1135.0 1121.1,1139.9 1126.2,1137.0 1131.4,1140.9 1136.5,1136.9 1141.7,1141.2 1146.8,1137.3 1152.0,1140.3 1157.1,1140.9 1162.3,1136.9 1167.4,1137.6 1172.6,1139.6 1177.7,1135.8 1182.9,1140.5 1188.0,1141.0 1193.2,1137.2 1198.3,1139.7 1203.5,1137.7 1208.6,1136.7 1213.8,1141.2 1218.9,1135.5 1224.1,1140.3 1229.3,1137.8 1234.4,1141.3 1239.6,1141.6 1244.7,1136.1 1249.9,1140.3 1255.0,1136.0 1260.2,1140.4 1265.3,1135.6 1270.5,1136.1 1275.6,1141.5 1280.8,1140.9 1285.9,1136.4 1291.1,1141.4 1296.2,1140.8 1301.4,1135.5 1306.5,1142.0 1311.7,1137.3 1316.8,1140.0 1322.0,1135.9 1327.1,1142.0 1332.3,1136.5 1337.4,1142.1 1342.6,1135.3 1347.7,1140.9 1352.9,1137.1 1358.1,1135.0 1363.2,1136.1 1368.4,1141.7 1373.5,1135.3 1378.7,1141.0 1383.8,1139.9 1389.0,1137.7 1394.1,1139.8 1399.3,1142.0 1404.4,1137.0 1409.6,1141.4 1414.7,1136.2 1419.9,1137.8 1425.0,1140.7 1430.2,1136.8 1435.3,1139.8 1440.5,1137.1 1445.6,1140.3 1450.8,1137.8 1455.9,1139.7 1461.1,1141.0 1466.2,1136.7 1471.4,1141.3 1476.5,1135.7 1481.7,1142.2 1486.9,1141.8 1492.0,1136.6 1497.2,1141.9 1502.3,1136.4 1507.5,1141.9 1512.6,1137.7 1517.8,1141.9 1522.9,1136.2 1528.1,1140.2 1533.2,1137.7 1538.4,1140.6 1543.5,1136.7 1548.7,1141.3 1553.8,1137.2 1559.0,1140.5 1564.1,1137.7 1569.3,1135.1 1574.4,1141.8 1579.6,1135.6 1584.7,1141.5 1589.9,1135.3 1595.0,1141.6 1600.2,1136.3 1605.3,1137.9 1610.5,1140.2 1615.7,1137.7 1620.8,1135.5 1626.0,1140.3 1631.1,1137.7 1636.3,1141.9 1641.4,1136.4 1646.6,1135.1 1651.7,1141.0 1656.9,1132.5 1662.0,1136.3 1667.2,1135.5 1672.3,1140.8 1677.5,1145.1 1682.6,1134.0 1687.8,1144.5 1692.9,1136.7 1698.1,1141.5 1703.2,1144.4 1708.4,1136.6 1713.5,1144.8 1718.7,1136.9 1723.8,1141.5 1729.0,1136.3 1734.1,1141.1 1739.3,1133.2 1744.5,1143.3 1749.6,1143.0 1754.8,1135.7 1759.9,1133.8 1765.1,1143.2 1770.2,1132.2 1775.4,1142.6 1780.5,1136.8 1785.7,1144.4 1790.8,1129.8 1796.0,1144.4 1801.1,1134.9 1806.3,1146.8 1811.4,1128.9 1816.6,1136.9 1821.7,1148.7 1826.9,1128.7 1832.0,1143.5 1837.2,1131.3 1842.3,1147.9 1847.5,1132.4 1852.6,1149.6 1857.8,1132.4 1862.9,1135.6 1868.1,1143.3 1873.3,1135.0 1878.4,1148.9 1883.6,1129.9 1888.7,1146.3 1893.9,1131.9 1899.0,1142.1 1904.2,1130.6 1909.3,1149.8 1914.5,1135.8 1919.6,1146.4 1924.8,1133.1 1929.9,1149.1 1935.1,1128.9 1940.2,1146.8 1945.4,1135.0 1950.5,1144.7 1955.7,1134.3 1960.8,1146.6 1966.0,1131.8 1971.1,1149.3 1976.3,1134.9 1981.4,1148.2 1986.6,1149.0 1991.7,1133.4 1996.9,1143.8 2002.1,1142.2 2007.2,1130.2 2012.4,1135.9 2017.5,1148.7 2022.7,1135.0 2027.8,1135.9 2033.0,1144.5 2038.1,1136.5 2043.3,1151.0 2048.4,1130.4 2053.6,1144.1 2058.7,1135.0 2063.9,1150.4 2069.0,1134.1 2074.2,1160.0 2079.3,1145.5 2084.5,1136.7 2089.6,1148.2 2094.8,1147.2 2099.9,1146.1 2105.1,1129.4 2110.2,1149.0 2115.4,1134.0 2120.5,1146.9 2125.7,1135.3 2130.9,1146.1 2136.0,1133.1 2141.2,1131.0 2146.3,1135.3 2151.5,1142.5 2156.6,1133.9 2161.8,1142.0 2166.9,1134.8 2172.1,1150.3 2177.2,1134.7 2182.4,1143.2 2187.5,1158.0 2192.7,1130.5 2197.8,1137.0 2203.0,1145.3 2208.1,1129.1 2213.3,1148.9 2218.4,1136.7 2223.6,1144.0 2228.7,1161.0 2233.9,1142.1" fill="none" stroke="#2fb62f" stroke-width="4" stroke-linejoin="round" stroke-linecap="butt"/><line x1="716.8" y1="953.0" x2="716.8" y2="1170.0" stroke="#000" stroke-width="2.2"/><line x1="704.3" y1="954.0" x2="716.8" y2="954.0" stroke="#000" stroke-width="2"/><line x1="704.3" y1="984.7" x2="716.8" y2="984.7" stroke="#000" stroke-width="2"/><line x1="704.3" y1="1015.4" x2="716.8" y2="1015.4" stroke="#000" stroke-width="2"/><line x1="704.3" y1="1046.1" x2="716.8" y2="1046.1" stroke="#000" stroke-width="2"/><line x1="704.3" y1="1076.8" x2="716.8" y2="1076.8" stroke="#000" stroke-width="2"/><line x1="704.3" y1="1107.5" x2="716.8" y2="1107.5" stroke="#000" stroke-width="2"/><line x1="704.3" y1="1138.3" x2="716.8" y2="1138.3" stroke="#000" stroke-width="2"/><line x1="704.3" y1="1169.0" x2="716.8" y2="1169.0" stroke="#000" stroke-width="2"/><line x1="695.9" y1="1172.1" x2="2240.0" y2="1172.1" stroke="#000" stroke-width="2.2"/><line x1="696.9" y1="1172.1" x2="696.9" y2="1182.6" stroke="#000" stroke-width="2"/><line x1="908.9" y1="1172.1" x2="908.9" y2="1182.6" stroke="#000" stroke-width="2"/><line x1="1166.5" y1="1172.1" x2="1166.5" y2="1182.6" stroke="#000" stroke-width="2"/><line x1="1424.1" y1="1172.1" x2="1424.1" y2="1182.6" stroke="#000" stroke-width="2"/><line x1="1681.7" y1="1172.1" x2="1681.7" y2="1182.6" stroke="#000" stroke-width="2"/><line x1="1939.3" y1="1172.1" x2="1939.3" y2="1182.6" stroke="#000" stroke-width="2"/><line x1="2196.9" y1="1172.1" x2="2196.9" y2="1182.6" stroke="#000" stroke-width="2"/><line x1="2239.0" y1="1172.1" x2="2239.0" y2="1182.6" stroke="#000" stroke-width="2"/><line x1="696.9" y1="1287.4" x2="2239.0" y2="1287.4" stroke="#c4c4c4" stroke-width="2"/><line x1="696.9" y1="1333.1" x2="2239.0" y2="1333.1" stroke="#c4c4c4" stroke-width="2"/><line x1="696.9" y1="1378.8" x2="2239.0" y2="1378.8" stroke="#c4c4c4" stroke-width="2"/><line x1="696.9" y1="1424.5" x2="2239.0" y2="1424.5" stroke="#c4c4c4" stroke-width="2"/><line x1="928.9" y1="1251.6" x2="928.9" y2="1470.2" stroke="#c4c4c4" stroke-width="2"/><line x1="1186.5" y1="1251.6" x2="1186.5" y2="1470.2" stroke="#c4c4c4" stroke-width="2"/><line x1="1444.1" y1="1251.6" x2="1444.1" y2="1470.2" stroke="#c4c4c4" stroke-width="2"/><line x1="1701.7" y1="1251.6" x2="1701.7" y2="1470.2" stroke="#c4c4c4" stroke-width="2"/><line x1="1959.3" y1="1251.6" x2="1959.3" y2="1470.2" stroke="#c4c4c4" stroke-width="2"/><line x1="2216.9" y1="1251.6" x2="2216.9" y2="1470.2" stroke="#c4c4c4" stroke-width="2"/><polyline points="709.0,1453.0 719.1,1452.8 729.2,1453.1 739.3,1452.9 749.4,1453.2 759.6,1453.2 769.7,1452.7 779.8,1452.7 789.9,1453.5 800.0,1453.2 810.0,1453.0 820.0,1453.0 830.0,1453.9 840.0,1453.4 850.0,1453.8 860.0,1453.5 870.0,1453.6 880.4,1453.7 890.7,1453.1 901.0,1453.5 911.4,1453.7 921.8,1453.2 932.1,1453.4 942.4,1453.2 952.8,1453.0 964.6,1452.4 976.4,1453.0 988.2,1452.7 1000.0,1452.5 1010.5,1451.9 1021.0,1451.2 1031.6,1451.5 1042.1,1450.7 1052.6,1450.3 1063.4,1449.8 1074.2,1449.1 1085.0,1448.0 1096.3,1447.1 1107.7,1446.2 1119.0,1444.6 1129.3,1443.1 1139.7,1442.2 1150.0,1440.5 1161.9,1438.7 1173.8,1437.5 1185.7,1435.3 1197.1,1434.2 1208.6,1432.0 1220.0,1431.0 1230.8,1429.4 1241.5,1428.3 1252.3,1427.3 1263.7,1426.1 1275.0,1424.0 1292.2,1419.7 1306.1,1418.5 1320.0,1417.5 1330.7,1416.7 1341.3,1415.4 1352.0,1414.7 1364.0,1413.5 1376.0,1412.2 1388.0,1411.0 1400.0,1410.0 1410.7,1409.2 1421.3,1408.4 1432.0,1407.4 1445.0,1406.8 1458.0,1405.6 1471.0,1404.4 1483.2,1405.0 1495.5,1405.1 1507.8,1405.3 1520.0,1405.0 1530.2,1405.5 1540.5,1405.3 1550.8,1406.3 1561.0,1406.3 1574.0,1405.8 1587.0,1404.8 1600.0,1403.5 1611.3,1402.6 1622.7,1401.6 1635.1,1402.1 1647.6,1402.0 1660.0,1402.6 1672.2,1403.8 1684.4,1404.4 1698.6,1404.5 1712.8,1404.4 1723.9,1403.0 1735.0,1402.0 1753.0,1398.2 1763.7,1393.1 1774.4,1388.8 1793.4,1374.5 1805.2,1364.7 1817.0,1354.2 1830.0,1347.1 1843.0,1339.0 1856.1,1335.7 1869.2,1333.3 1880.3,1333.1 1891.3,1332.3 1902.4,1331.9 1913.1,1331.9 1923.7,1332.4 1934.3,1333.2 1945.0,1333.3 1956.4,1334.8 1967.8,1335.1 1979.1,1336.8 1990.5,1337.4 2001.9,1339.0 2014.6,1339.7 2027.3,1339.8 2040.0,1340.5 2051.8,1341.3 2063.6,1341.9 2075.4,1341.9 2087.2,1342.3 2097.7,1343.0 2108.1,1342.5 2118.6,1342.5 2129.1,1343.2 2139.5,1342.8 2150.0,1343.5 2161.0,1343.3 2172.0,1343.6 2183.0,1343.9 2194.0,1343.5 2205.0,1343.5 2216.0,1344.4 2227.0,1343.9 2238.0,1344.2" fill="none" stroke="#0a3fd8" stroke-width="4.2" stroke-linejoin="round"/><line x1="716.8" y1="1250.6" x2="716.8" y2="1471.2" stroke="#000" stroke-width="2.2"/><line x1="704.3" y1="1287.4" x2="716.8" y2="1287.4" stroke="#000" stroke-width="2"/><line x1="704.3" y1="1333.1" x2="716.8" y2="1333.1" stroke="#000" stroke-width="2"/><line x1="704.3" y1="1378.8" x2="716.8" y2="1378.8" stroke="#000" stroke-width="2"/><line x1="704.3" y1="1424.5" x2="716.8" y2="1424.5" stroke="#000" stroke-width="2"/><line x1="704.3" y1="1470.2" x2="716.8" y2="1470.2" stroke="#000" stroke-width="2"/><line x1="704.3" y1="1251.6" x2="716.8" y2="1251.6" stroke="#000" stroke-width="2"/><line x1="695.9" y1="1470.2" x2="2240.0" y2="1470.2" stroke="#000" stroke-width="2.2"/><line x1="696.9" y1="1470.2" x2="696.9" y2="1480.7" stroke="#000" stroke-width="2"/><line x1="908.9" y1="1470.2" x2="908.9" y2="1480.7" stroke="#000" stroke-width="2"/><line x1="1166.5" y1="1470.2" x2="1166.5" y2="1480.7" stroke="#000" stroke-width="2"/><line x1="1424.1" y1="1470.2" x2="1424.1" y2="1480.7" stroke="#000" stroke-width="2"/><line x1="1681.7" y1="1470.2" x2="1681.7" y2="1480.7" stroke="#000" stroke-width="2"/><line x1="1939.3" y1="1470.2" x2="1939.3" y2="1480.7" stroke="#000" stroke-width="2"/><line x1="2196.9" y1="1470.2" x2="2196.9" y2="1480.7" stroke="#000" stroke-width="2"/><line x1="2239.0" y1="1470.2" x2="2239.0" y2="1480.7" stroke="#000" stroke-width="2"/><line x1="696.9" y1="1549.8" x2="2239.0" y2="1549.8" stroke="#c4c4c4" stroke-width="2"/><line x1="964.4" y1="1549.8" x2="964.4" y2="1570" stroke="#c4c4c4" stroke-width="2"/><line x1="1221.7" y1="1549.8" x2="1221.7" y2="1570" stroke="#c4c4c4" stroke-width="2"/><line x1="1479.6" y1="1549.8" x2="1479.6" y2="1570" stroke="#c4c4c4" stroke-width="2"/><line x1="1737.4" y1="1549.8" x2="1737.4" y2="1570" stroke="#c4c4c4" stroke-width="2"/><line x1="1996.2" y1="1549.8" x2="1996.2" y2="1570" stroke="#c4c4c4" stroke-width="2"/><line x1="716.8" y1="1548.8" x2="716.8" y2="1570" stroke="#000" stroke-width="2.2"/><line x1="704.3" y1="1549.8" x2="716.8" y2="1549.8" stroke="#000" stroke-width="2"/></svg><span class="t" style="left:659.64px;top:937.78px;font-size:30.5px;color:#111;transform:scaleX(0.9028);">0.2</span><span class="t" style="left:682.14px;top:968.49px;font-size:30.5px;color:#111;transform:scaleX(0.9049);">0</span><span class="t" style="left:649.52px;top:999.20px;font-size:30.5px;color:#111;transform:scaleX(0.9212);">-0.2</span><span class="t" style="left:649.12px;top:1029.91px;font-size:30.5px;color:#111;transform:scaleX(0.9205);">-0.4</span><span class="t" style="left:649.11px;top:1060.62px;font-size:30.5px;color:#111;transform:scaleX(0.9292);">-0.6</span><span class="t" style="left:649.11px;top:1091.33px;font-size:30.5px;color:#111;transform:scaleX(0.9292);">-0.8</span><span class="t" style="left:672.09px;top:1122.04px;font-size:30.5px;color:#111;transform:scaleX(0.9547);">-1</span><span class="t" style="left:649.52px;top:1152.75px;font-size:30.5px;color:#111;transform:scaleX(0.9212);">-1.2</span><span class="t" style="left:659.33px;top:1271.18px;font-size:30.5px;color:#111;transform:scaleX(0.9102);">0.8</span><span class="t" style="left:659.33px;top:1316.88px;font-size:30.5px;color:#111;transform:scaleX(0.9102);">0.6</span><span class="t" style="left:659.34px;top:1362.58px;font-size:30.5px;color:#111;transform:scaleX(0.8996);">0.4</span><span class="t" style="left:659.64px;top:1408.28px;font-size:30.5px;color:#111;transform:scaleX(0.9028);">0.2</span><span class="t" style="left:682.14px;top:1453.98px;font-size:30.5px;color:#111;transform:scaleX(0.9049);">0</span><span class="t" style="left:876.80px;top:1185.18px;font-size:30.5px;color:#111;transform:scaleX(0.9435);">5300</span><span class="t" style="left:1134.40px;top:1185.18px;font-size:30.5px;color:#111;transform:scaleX(0.9435);">5350</span><span class="t" style="left:1392.00px;top:1185.18px;font-size:30.5px;color:#111;transform:scaleX(0.9435);">5400</span><span class="t" style="left:1649.60px;top:1185.18px;font-size:30.5px;color:#111;transform:scaleX(0.9435);">5450</span><span class="t" style="left:1907.20px;top:1185.18px;font-size:30.5px;color:#111;transform:scaleX(0.9435);">5500</span><span class="t" style="left:2164.80px;top:1185.18px;font-size:30.5px;color:#111;transform:scaleX(0.9435);">5550</span><span class="t" style="left:876.80px;top:1483.28px;font-size:30.5px;color:#111;transform:scaleX(0.9435);">5300</span><span class="t" style="left:1134.40px;top:1483.28px;font-size:30.5px;color:#111;transform:scaleX(0.9435);">5350</span><span class="t" style="left:1392.00px;top:1483.28px;font-size:30.5px;color:#111;transform:scaleX(0.9435);">5400</span><span class="t" style="left:1649.60px;top:1483.28px;font-size:30.5px;color:#111;transform:scaleX(0.9435);">5450</span><span class="t" style="left:1907.20px;top:1483.28px;font-size:30.5px;color:#111;transform:scaleX(0.9435);">5500</span><span class="t" style="left:2164.80px;top:1483.28px;font-size:30.5px;color:#111;transform:scaleX(0.9435);">5550</span><span class="t" style="left:643.93px;top:1534.18px;font-size:30.5px;color:#111;transform:scaleX(0.9124);">0.04</span><span class="t" style="left:2269.19px;top:976.15px;font-size:29px;color:#333;transform:scaleX(0.9106);font-weight:bold;">Accelerometer</span><span class="t" style="left:2269.75px;top:1022.05px;font-size:29px;color:#333;transform:scaleX(0.9866);">X:</span><span class="t" style="left:2304.52px;top:1021.63px;font-size:29.5px;color:#0a3fd8;transform:scaleX(0.9575);">0.000</span><span class="t" style="left:2386.88px;top:1022.05px;font-size:29px;color:#333;transform:scaleX(0.8318);font-weight:bold;font-style:italic;">g</span><span class="t" style="left:2269.75px;top:1065.65px;font-size:29px;color:#333;transform:scaleX(0.9900);">Y:</span><span class="t" style="left:2302.81px;top:1065.23px;font-size:29.5px;color:#dd0808;transform:scaleX(0.9616);">-0.021</span><span class="t" style="left:2396.38px;top:1065.65px;font-size:29px;color:#333;transform:scaleX(0.8318);font-weight:bold;font-style:italic;">g</span><span class="t" style="left:2269.32px;top:1109.65px;font-size:29px;color:#333;transform:scaleX(0.9665);">Z:</span><span class="t" style="left:2302.20px;top:1109.23px;font-size:29.5px;color:#35b535;transform:scaleX(0.9763);">-0.939</span><span class="t" style="left:2396.38px;top:1109.65px;font-size:29px;color:#333;transform:scaleX(0.8318);font-weight:bold;font-style:italic;">g</span><span class="t" style="left:2269.50px;top:1274.35px;font-size:29px;color:#333;transform:scaleX(0.9447);font-weight:bold;">Vibration</span><span class="t" style="left:2269.50px;top:1320.35px;font-size:29px;color:#333;transform:scaleX(1.0279);">Vibration:</span><span class="t" style="left:2402.53px;top:1319.93px;font-size:29.5px;color:#0a3fd8;transform:scaleX(0.9469);">0.551</span><span class="t" style="left:2483.79px;top:1320.35px;font-size:29px;color:#333;transform:scaleX(0.8658);font-weight:bold;font-style:italic;">g</span><div class="abs" style="left:0;top:1486px;width:2568px;height:80px;background:radial-gradient(ellipse 1800px 80px at 1290px 100%, rgba(60,60,60,.27) 0%, rgba(60,60,60,.17) 30%, rgba(60,60,60,.07) 62%, rgba(60,60,60,.02) 85%, rgba(60,60,60,0) 100%)"></div></div></body></html>
